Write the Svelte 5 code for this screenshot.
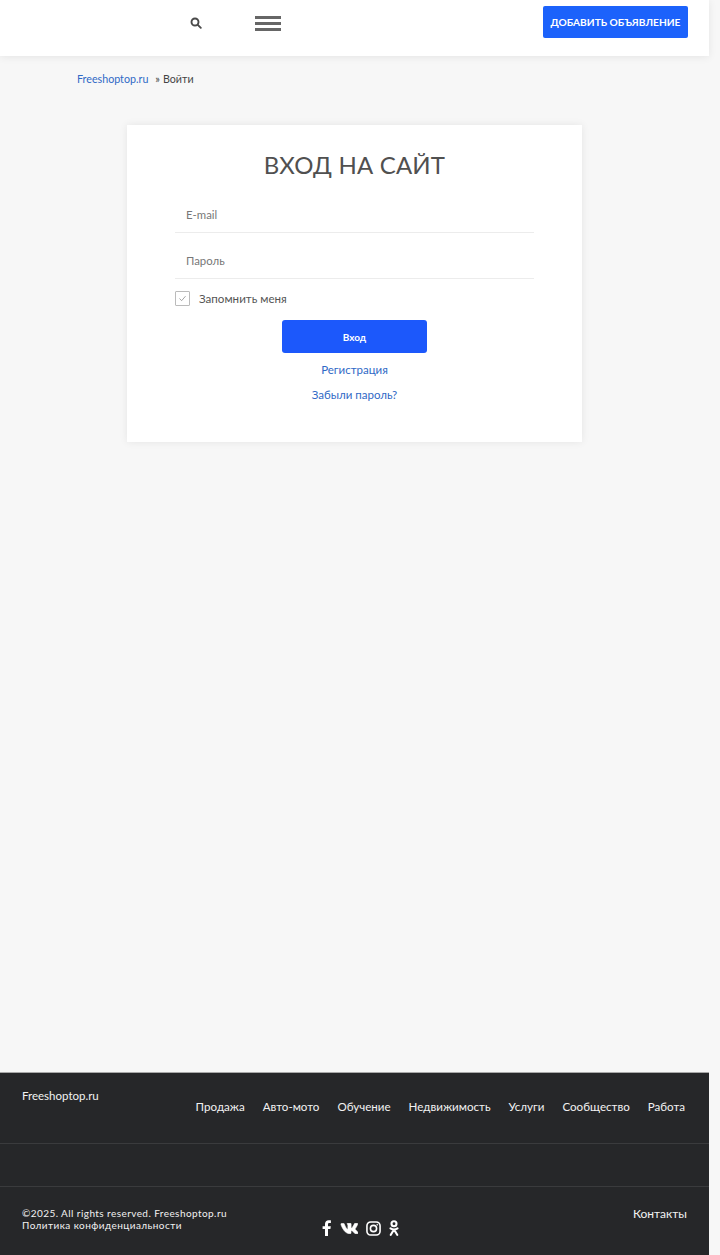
<script lang="ts">
const navLinks = ['Продажа', 'Авто-мото', 'Обучение', 'Недвижимость', 'Услуги', 'Сообщество', 'Работа'];
</script>

<div class="page">
	<header class="topbar">
		<button class="icon-btn" aria-label="Поиск">
			<svg viewBox="0 0 12 12" width="12" height="12" fill="none" stroke="#4a4a4a" stroke-width="1.9" stroke-linecap="round">
				<circle cx="5" cy="5" r="3.5" />
				<path d="M7.8 7.8 10.8 10.8" />
			</svg>
		</button>
		<div class="burger"><span></span><span></span><span></span></div>
		<a class="add-btn" href="#add">ДОБАВИТЬ ОБЪЯВЛЕНИЕ</a>
	</header>

	<main class="content">
		<div class="crumbs"><a href="#home">Freeshoptop.ru</a><span class="sep">»</span><span>Войти</span></div>

		<section class="card">
			<h1>ВХОД НА САЙТ</h1>
			<form class="login">
				<div class="field">E-mail</div>
				<div class="field">Пароль</div>
				<label class="remember">
					<span class="check">
						<svg viewBox="0 0 15 15" width="13" height="13" fill="none" stroke="#8a8a8a" stroke-width="0.9">
							<path d="M4 7.5 6.5 10 11 4.8" />
						</svg>
					</span>
					<span class="remember-text">Запомнить меня</span>
				</label>
				<button class="submit" type="button">Вход</button>
				<a class="link first" href="#reg">Регистрация</a>
				<a class="link" href="#forgot">Забыли пароль?</a>
			</form>
		</section>
	</main>

	<footer class="footer">
		<div class="foot-top">
			<div class="brand">Freeshoptop.ru</div>
			<nav class="foot-nav">
				{#each navLinks as item}
					<a href="#nav">{item}</a>
				{/each}
			</nav>
		</div>
		<div class="foot-mid"></div>
		<div class="foot-bottom">
			<div class="copy">
				<div>©2025. All rights reserved. Freeshoptop.ru</div>
				<div>Политика конфиденциальности</div>
			</div>
			<div class="social">
				<svg viewBox="0 0 10 16" width="10" height="16" fill="#fff"><path d="M3 16V9H.6V6.2H3V4.1C3 1.600 4.500.3 6.700.3c1 0 1.900.1 2.200.1v2.600H7.400c-1.200 0-1.400.6-1.400 1.400v1.800h2.800L8.400 9H6v7Z" /></svg>
				<svg viewBox="0 0 18 11" width="18" height="11" fill="#fff" stroke="#fff" stroke-width="0.6"><path d="M17.700 1c.1-.4 0-.7-.6-.7h-1.900c-.5 0-.7.2-.8.5 0 0-.9 2.200-2.200 3.700-.4.400-.6.500-.8.500-.1 0-.3-.1-.3-.5V1c0-.5-.1-.7-.5-.7h-3c-.3 0-.5.2-.5.400 0 .500.7.600.8 1.900v2.900c0 .6-.1.700-.4.700-.6 0-2.200-2.300-3.100-5-.2-.6-.4-.7-.9-.7H1.600C1 .5.900.700.900 1c0 .500.700 3 3 6.300C5.500 9.500 7.700 10.700 9.700 10.700c1.200 0 1.300-.3 1.300-.7V8.300c0-.5.100-.6.500-.6.300 0 .800.100 1.900 1.200 1.300 1.300 1.500 1.800 2.200 1.800h1.900c.5 0 .800-.3.700-.8-.2-.5-.8-1.200-1.600-2.100-.4-.5-1.100-1-1.300-1.300-.3-.4-.2-.5 0-.9 0 0 2.300-3.200 2.300-4.600Z" /></svg>
				<svg viewBox="0 0 16 16" width="15" height="15" fill="none" stroke="#fff" stroke-width="1.700"><rect x="1" y="1" width="14" height="14" rx="4" /><circle cx="8" cy="8" r="3.300" /><circle cx="12" cy="4" r="0.500" fill="#fff" stroke-width="0.800" /></svg>
				<svg viewBox="0 0 10 16" width="10" height="16" fill="none" stroke="#fff" stroke-width="2.100" stroke-linecap="round"><circle cx="5" cy="3.700" r="2.500" /><path d="M1.500 8.300C3.500 9.700 6.500 9.700 8.500 8.300M5 9.500 1.800 14.800M5 9.500 8.200 14.800" /></svg>
			</div>
			<a class="contacts" href="#contacts">Контакты</a>
		</div>
	</footer>
</div>

<style>
	:global(body) {
		background: #f7f7f7;
		font-family: Lato, "Noto Sans", sans-serif;
	}

	a {
		text-decoration: none;
	}

	.page {
		width: 709px;
		min-height: 1255px;
		display: flex;
		flex-direction: column;
		color: #444;
	}

	.topbar {
		height: 56px;
		box-sizing: border-box;
		background: #fff;
		box-shadow: 0 1px 8px rgba(0, 0, 0, 0.08);
		display: flex;
		align-items: flex-start;
		padding: 6px 21px 0 190px;
	}

	.icon-btn {
		border: 0;
		background: none;
		padding: 0;
		width: 12px;
		height: 12px;
		margin-top: 11px;
		display: flex;
	}

	.burger {
		margin: 10px 0 0 53px;
		width: 26px;
		display: flex;
		flex-direction: column;
		gap: 3px;
	}

	.burger span {
		height: 3px;
		background: #666;
	}

	.add-btn {
		margin-left: auto;
		width: 145px;
		height: 32px;
		background: #1c62fb;
		border-radius: 2px;
		color: #fff;
		font-size: 10.2px;
		font-weight: 700;
		display: flex;
		align-items: center;
		justify-content: center;
		white-space: nowrap;
	}

	.content {
		flex: 1;
	}

	.crumbs {
		padding: 16px 0 0 77px;
		font-size: 10.7px;
		line-height: 14px;
		color: #444;
		height: 69px;
		box-sizing: border-box;
	}

	.crumbs a {
		color: #2f69c6;
	}

	.sep {
		margin: 0 3px 0 7px;
	}

	.card {
		width: 455px;
		height: 317px;
		box-sizing: border-box;
		margin-left: 127px;
		background: #fff;
		box-shadow: 0 0 8px rgba(0, 0, 0, 0.08);
		padding: 24px 48px 0;
	}

	h1 {
		margin: 0 0 6px;
		font-size: 24px;
		line-height: 32px;
		font-weight: 400;
		letter-spacing: 0.2px;
		color: #505050;
		text-align: center;
	}

	.login {
		display: flex;
		flex-direction: column;
		align-items: stretch;
	}

	.field {
		height: 46px;
		box-sizing: border-box;
		padding: 20px 0 0 11px;
		font-size: 11.4px;
		line-height: 16px;
		color: #777;
		border-bottom: 1px solid #ececec;
	}

	.remember {
		margin-top: 12px;
		display: flex;
		align-items: center;
		gap: 9px;
		font-size: 11.6px;
		line-height: 15px;
		color: #555;
	}

	.remember-text {
		margin-top: -1px;
	}

	.check {
		width: 15px;
		height: 15px;
		box-sizing: border-box;
		border: 1px solid #bbb;
		border-radius: 1px;
		display: flex;
		align-items: center;
		justify-content: center;
	}

	.submit {
		align-self: center;
		width: 145px;
		height: 33px;
		margin-top: 14px;
		border: 0;
		border-radius: 3px;
		background: #1c58fb;
		color: #fff;
		font-family: inherit;
		font-size: 10px;
		font-weight: 700;
		padding: 0;
	}

	.link {
		text-align: center;
		font-size: 11.5px;
		line-height: 15px;
		margin-top: 10px;
		color: #2f69c6;
	}

	.link.first {
		margin-top: 9px;
	}

	.footer {
		height: 183px;
		box-sizing: border-box;
		background: #262729;
		border-top: 1px solid #a8a8a8;
		color: #f2f2f2;
	}

	.foot-top {
		height: 71px;
		box-sizing: border-box;
		display: flex;
		justify-content: space-between;
		padding: 15px 24px 0 22px;
		border-bottom: 1px solid #3a3b3d;
	}

	.brand {
		font-size: 11.5px;
		line-height: 15px;
	}

	.foot-nav {
		display: flex;
		gap: 18px;
		padding-top: 11px;
	}

	.foot-nav a {
		color: #f2f2f2;
		font-size: 11.6px;
		line-height: 15px;
	}

	.foot-mid {
		height: 43px;
		box-sizing: border-box;
		border-bottom: 1px solid #3a3b3d;
	}

	.foot-bottom {
		display: flex;
		padding: 19px 22px 0;
	}

	.copy {
		font-size: 10px;
		line-height: 12px;
		letter-spacing: 0.43px;
		width: 300px;
		padding-top: 1px;
	}

	.social {
		margin-top: 14px;
		display: flex;
		align-items: center;
		gap: 8px;
		height: 16px;
	}

	.contacts {
		margin-left: auto;
		color: #f2f2f2;
		font-size: 12px;
		line-height: 15px;
	}
</style>
